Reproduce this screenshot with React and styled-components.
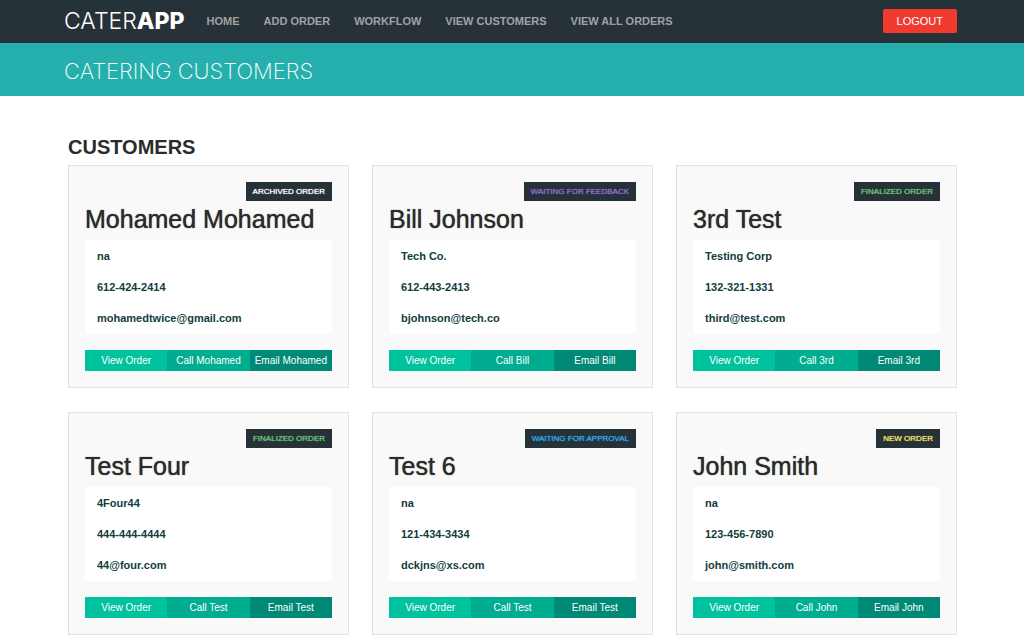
import React from "react";
import styled, { createGlobalStyle } from "styled-components";

const GlobalStyle = createGlobalStyle`
  *, *::before, *::after { box-sizing: border-box; }
  body {
    margin: 0;
    background: #fff;
    color: #2b2b2b;
    font-family: "Liberation Sans", Arial, sans-serif;
  }
  h1, h2, h3, ul { margin: 0; padding: 0; }
  ul { list-style: none; }
  a { text-decoration: none; }
`;

const TopBar = styled.header`
  display: flex;
  align-items: center;
  padding: 7px 67px 8px 64px;
  background: #263238;
  box-shadow: inset 0 1px #17393d;
`;

const Brand = styled.a`
  color: #fff;
  font-family: Inter, "Liberation Sans", sans-serif;
  font-size: 23px;
  font-weight: 300;
  line-height: 28px;

  strong { font-weight: 800; }
`;

const Nav = styled.nav`
  display: flex;
  gap: 24px;
  margin-left: 22px;
  flex: 1;
`;

const NavLink = styled.a`
  color: #a0a2a2;
  font-size: 11px;
  font-weight: 700;
  line-height: 16px;
  white-space: nowrap;
`;

const Logout = styled.button`
  height: 24px;
  padding: 0 14px;
  border: 0;
  border-radius: 2px;
  background: #f03a30;
  color: #fff;
  font: 11px/24px "Liberation Sans", sans-serif;
`;

const TitleBand = styled.div`
  padding: 14px 64px 11px;
  background: #26b0ad;
`;

const PageTitle = styled.h1`
  color: #fff;
  font-family: Inter, "Liberation Sans", sans-serif;
  font-size: 22px;
  font-weight: 200;
  line-height: 28px;
`;

const Main = styled.main`
  padding: 39px 67px 24px 68px;
`;

const SectionTitle = styled.h2`
  font-size: 20px;
  font-weight: 700;
  line-height: 24px;
  margin-bottom: 6px;
`;

const CardGrid = styled.div`
  display: grid;
  grid-template-columns: repeat(3, minmax(0, 1fr));
  gap: 24px 23px;
`;

const Card = styled.article`
  display: flex;
  flex-direction: column;
  padding: 16px;
  border: 1px solid #e2e2e2;
  background: #f9f9f9;
`;

const Badge = styled.span`
  align-self: flex-end;
  padding: 0 7px;
  background: #263238;
  color: ${(p) => p.$color};
  font-size: 8px;
  line-height: 19px;
  text-shadow: 0 0 1px;
`;

const Name = styled.h3`
  padding: 4px 0 7px;
  font-size: 25px;
  font-weight: 400;
  line-height: 28px;
  text-shadow: 0 0 1px;
`;

const Details = styled.ul`
  display: flex;
  flex-direction: column;
  gap: 15px;
  padding: 8px 12px;
  border-radius: 2px;
  background: #fff;
`;

const Detail = styled.li`
  color: #123c40;
  font-size: 11px;
  font-weight: 700;
  line-height: 16px;
`;

const Actions = styled.div`
  display: grid;
  grid-template-columns: repeat(3, 1fr);
  margin-top: 16px;
`;

const tones = ["#00c39e", "#00ad90", "#008a76"];

const Action = styled.button`
  height: 21px;
  padding: 0;
  border: 0;
  background: ${(p) => tones[p.$tone]};
  color: #fff;
  font: 10px/21px "Liberation Sans", sans-serif;
  white-space: nowrap;
`;

const links = ["HOME", "ADD ORDER", "WORKFLOW", "VIEW CUSTOMERS", "VIEW ALL ORDERS"];

const statuses = {
  archived: { label: "ARCHIVED ORDER", color: "#ffffff" },
  feedback: { label: "WAITING FOR FEEDBACK", color: "#8f6fd8" },
  finalized: { label: "FINALIZED ORDER", color: "#6fc47a" },
  approval: { label: "WAITING FOR APPROVAL", color: "#2cabf0" },
  fresh: { label: "NEW ORDER", color: "#f5e663" },
};

const customers = [
  { name: "Mohamed Mohamed", short: "Mohamed", company: "na", phone: "612-424-2414", email: "mohamedtwice@gmail.com", status: "archived" },
  { name: "Bill Johnson", short: "Bill", company: "Tech Co.", phone: "612-443-2413", email: "bjohnson@tech.co", status: "feedback" },
  { name: "3rd Test", short: "3rd", company: "Testing Corp", phone: "132-321-1331", email: "third@test.com", status: "finalized" },
  { name: "Test Four", short: "Test", company: "4Four44", phone: "444-444-4444", email: "44@four.com", status: "finalized" },
  { name: "Test 6", short: "Test", company: "na", phone: "121-434-3434", email: "dckjns@xs.com", status: "approval" },
  { name: "John Smith", short: "John", company: "na", phone: "123-456-7890", email: "john@smith.com", status: "fresh" },
];

function CustomerCard({ customer }) {
  const status = statuses[customer.status];
  return (
    <Card>
      <Badge $color={status.color}>{status.label}</Badge>
      <Name>{customer.name}</Name>
      <Details>
        <Detail>{customer.company}</Detail>
        <Detail>{customer.phone}</Detail>
        <Detail>{customer.email}</Detail>
      </Details>
      <Actions>
        <Action type="button" $tone={0}>View Order</Action>
        <Action type="button" $tone={1}>Call {customer.short}</Action>
        <Action type="button" $tone={2}>Email {customer.short}</Action>
      </Actions>
    </Card>
  );
}

export default function App() {
  return (
    <>
      <GlobalStyle />
      <TopBar>
        <Brand href="#">CATER<strong>APP</strong></Brand>
        <Nav>
          {links.map((link) => (
            <NavLink key={link} href="#">{link}</NavLink>
          ))}
        </Nav>
        <Logout type="button">LOGOUT</Logout>
      </TopBar>
      <TitleBand>
        <PageTitle>CATERING CUSTOMERS</PageTitle>
      </TitleBand>
      <Main>
        <SectionTitle>CUSTOMERS</SectionTitle>
        <CardGrid>
          {customers.map((customer) => (
            <CustomerCard key={customer.name} customer={customer} />
          ))}
        </CardGrid>
      </Main>
    </>
  );
}
